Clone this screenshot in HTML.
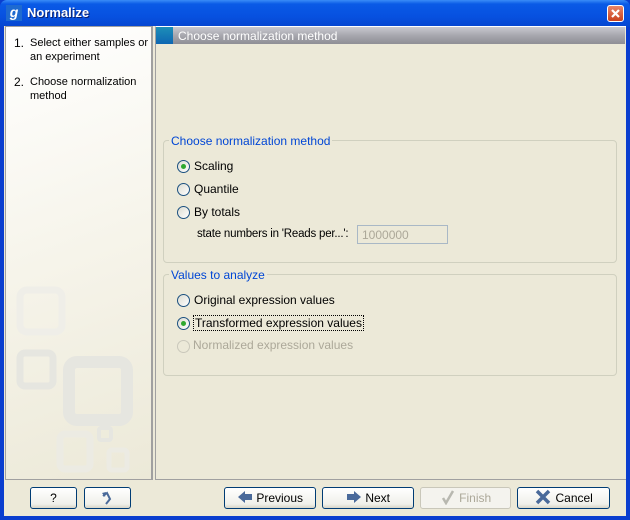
<!DOCTYPE html>
<html><head><meta charset="utf-8"><style>
*{margin:0;padding:0;box-sizing:border-box}
body{width:630px;height:520px;overflow:hidden;background:#0a3ecf;font-family:"Liberation Sans",sans-serif;font-size:12px;color:#000;position:relative}
.abs{position:absolute;white-space:nowrap}
#title{left:0;top:0;width:630px;height:27px;background:linear-gradient(#3a8cf7 0%,#0a5ae6 15%,#0751e0 60%,#0646d0 100%);border-radius:7px 7px 0 0}
#title .t{left:27px;top:5px;color:#fff;font-weight:bold;font-size:13px;text-shadow:1px 1px #0a1e6e}
#logo{left:6px;top:5px;width:16px;height:16px;background:#1e6ad0;color:#fff;font-weight:bold;font-style:italic;font-size:14px;line-height:15px;text-align:center}
#close{left:607px;top:5px;width:17px;height:17px;background:linear-gradient(#e8866a,#c9401c);border:1px solid #fff;border-radius:3px}
#body{left:4px;top:26px;width:622px;height:490px;background:#ece9d8}
#left{left:5px;top:26px;width:148px;height:454px;background:linear-gradient(160deg,#fff 0%,#f6f4ea 50%,#ece9d8 100%);border:1px solid #a0a0a0;border-right:2px solid #a0a0a0}
#right{left:155px;top:26px;width:471px;height:454px;border-left:1px solid #a0a0a0;border-top:1px solid #fff;border-bottom:1px solid #a0a0a0}
#hdr{left:156px;top:27px;width:469px;height:17px;background:linear-gradient(#c9c9d0,#a7a7ae 50%,#8e8e95);color:#fff}
#hdr .sq{position:absolute;left:0;top:0;width:17px;height:17px;background:linear-gradient(#1d8fb8,#0e66b2)}
#hdr .tx{position:absolute;left:22px;top:2px}
.step{color:#000;line-height:14px}
.grp{border:1px solid #d0d0bf;border-radius:4px}
.leg{color:#0046d5;background:#ece9d8;padding:0 2px}
.rad{width:13px;height:13px;border:1px solid #1c5180;border-radius:50%;background:linear-gradient(135deg,#dcdcd2,#fff)}
.rad.on::after{content:"";position:absolute;left:3px;top:3px;width:5px;height:5px;border-radius:50%;background:#2fa82f}
.rad.dis{border-color:#cac8bb;background:#ece9d8}
.btn{height:22px;border:1px solid #003c74;border-radius:3px;background:linear-gradient(#fff,#f0f0ea 80%,#d8d5c8);text-align:center;line-height:20px}
</style></head><body>
<div class="abs" id="title"><div class="abs" id="logo">g</div><div class="abs t">Normalize</div>
<div class="abs" id="close"><svg width="15" height="15" style="position:absolute;left:0;top:0"><path d="M4 4L11 11M11 4L4 11" stroke="#fff" stroke-width="2.2"/></svg></div></div>
<div class="abs" id="body"></div>
<div class="abs" id="left">
<svg width="146" height="452" style="position:absolute;left:0;top:0">
<g fill="none" stroke="#e6e6e0" stroke-width="7">
<rect x="14" y="263" width="42" height="42" rx="7" stroke="#efeee8"/>
<rect x="14" y="326" width="33" height="33" rx="5"/>
<rect x="63" y="335" width="58" height="58" rx="8" stroke-width="12"/>
<rect x="54" y="407" width="30" height="35" rx="5" stroke="#ecebe3"/>
<rect x="93" y="401" width="12" height="12" rx="2" stroke-width="4"/>
<rect x="103" y="423" width="18" height="20" rx="3" stroke="#ecebe3" stroke-width="5"/>
</g></svg>
<div class="abs step" style="left:8px;top:9px">1.</div><div class="abs step" style="left:24px;top:9px;font-size:11px">Select either samples or<br>an experiment</div>
<div class="abs step" style="left:8px;top:48px">2.</div><div class="abs step" style="left:24px;top:48px;font-size:11px">Choose normalization<br>method</div>
</div>
<div class="abs" id="right"></div>
<div class="abs" id="hdr"><div class="sq"></div><div class="tx">Choose normalization method</div></div>

<div class="abs grp" style="left:163px;top:140px;width:454px;height:123px"></div>
<div class="abs leg" style="left:169px;top:134px">Choose normalization method</div>
<div class="abs rad on" style="left:177px;top:160px"></div><div class="abs" style="left:194px;top:159px">Scaling</div>
<div class="abs rad" style="left:177px;top:183px"></div><div class="abs" style="left:194px;top:182px">Quantile</div>
<div class="abs rad" style="left:177px;top:206px"></div><div class="abs" style="left:194px;top:205px">By totals</div>
<div class="abs" style="left:197px;top:228px;font-size:11.5px;letter-spacing:-0.2px">state numbers in 'Reads per...':</div>
<div class="abs" style="left:357px;top:225px;width:91px;height:19px;border:1px solid #a9b8c6;background:#ece9d8;color:#aca899;padding:2px 4px">1000000</div>

<div class="abs grp" style="left:163px;top:274px;width:454px;height:102px"></div>
<div class="abs leg" style="left:169px;top:268px">Values to analyze</div>
<div class="abs rad" style="left:177px;top:294px"></div><div class="abs" style="left:194px;top:293px">Original expression values</div>
<div class="abs rad on" style="left:177px;top:317px"></div><div class="abs" style="left:193px;top:315px;border:1px dotted #000;padding:0 1px">Transformed expression values</div>
<div class="abs rad dis" style="left:177px;top:340px"></div><div class="abs" style="left:193px;top:338px;color:#aca899">Normalized expression values</div>

<div class="abs btn" style="left:30px;top:487px;width:47px">?</div>
<div class="abs btn" style="left:84px;top:487px;width:47px"><svg width="16" height="16" style="margin-top:2px"><path d="M6 14L10 9L7 3L3 6" fill="none" stroke="#4a6a9a" stroke-width="2"/><path d="M2 3L6 2L5 7Z" fill="#4a6a9a"/></svg></div>
<div class="abs btn" style="left:224px;top:487px;width:92px"><svg width="16" height="14" style="vertical-align:-2px"><path d="M1 7L8 1V4H15V10H8V13Z" fill="#4a6a9a"/></svg> Previous</div>
<div class="abs btn" style="left:322px;top:487px;width:92px"><svg width="16" height="14" style="vertical-align:-2px"><path d="M15 7L8 1V4H1V10H8V13Z" fill="#4a6a9a"/></svg> Next</div>
<div class="abs btn" style="left:420px;top:487px;width:91px;border-color:#c9c7ba;color:#aca899;background:#f4f3ee"><svg width="16" height="16" style="vertical-align:-3px"><path d="M3 9L6 14L13 2" fill="none" stroke="#b8b8b0" stroke-width="2.5"/></svg> Finish</div>
<div class="abs btn" style="left:517px;top:487px;width:93px"><svg width="18" height="16" style="vertical-align:-3px"><path d="M3 2L15 14M15 2L3 14" stroke="#4a6a9a" stroke-width="3.5"/></svg> Cancel</div>
</body></html>
